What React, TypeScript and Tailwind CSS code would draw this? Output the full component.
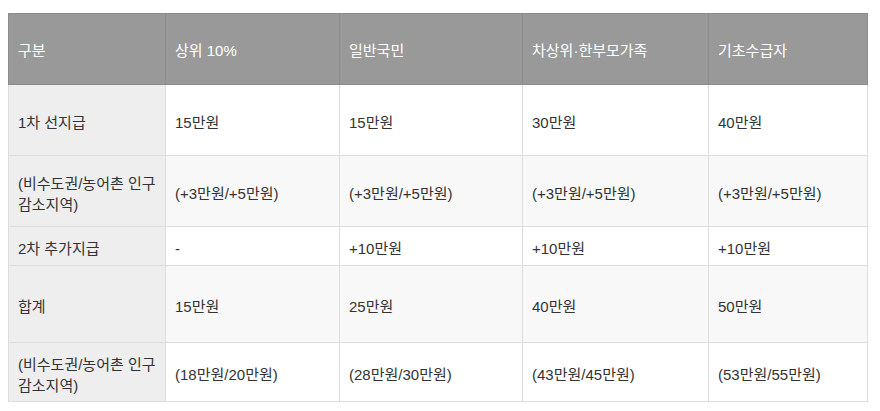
const header = ['구분', '상위 10%', '일반국민', '차상위·한부모가족', '기초수급자'];

type Row = { label: React.ReactNode; cells: string[]; h: string; striped: boolean };

const rows: Row[] = [
  { label: '1차 선지급', cells: ['15만원', '15만원', '30만원', '40만원'], h: 'h-[71px]', striped: false },
  {
    label: (
      <>
        (비수도권/농어촌 인구
        <br />
        감소지역)
      </>
    ),
    cells: ['(+3만원/+5만원)', '(+3만원/+5만원)', '(+3만원/+5만원)', '(+3만원/+5만원)'],
    h: 'h-[71px]',
    striped: true,
  },
  { label: '2차 추가지급', cells: ['-', '+10만원', '+10만원', '+10만원'], h: 'h-[39px]', striped: false },
  { label: '합계', cells: ['15만원', '25만원', '40만원', '50만원'], h: 'h-[77px]', striped: true },
  {
    label: (
      <>
        (비수도권/농어촌 인구
        <br />
        감소지역)
      </>
    ),
    cells: ['(18만원/20만원)', '(28만원/30만원)', '(43만원/45만원)', '(53만원/55만원)'],
    h: 'h-[59px]',
    striped: false,
  },
];

export default function App() {
  return (
    <div className="min-h-screen bg-white pt-[13px] pl-[8px] font-['Liberation_Sans','Noto_Sans_CJK_KR',sans-serif] text-[15px] text-[#333]">
      <table className="table-fixed border-collapse w-[859px]">
        <colgroup>
          <col className="w-[157px]" />
          <col className="w-[174px]" />
          <col className="w-[183px]" />
          <col className="w-[186px]" />
          <col className="w-[159px]" />
        </colgroup>
        <thead>
          <tr className="h-[71px] bg-[#999999]">
            {header.map((t) => (
              <th
                key={t}
                className="border border-[#8c8c8c] px-[9px] pt-[5px] text-left align-middle font-normal text-white"
              >
                {t}
              </th>
            ))}
          </tr>
        </thead>
        <tbody>
          {rows.map((r, i) => (
            <tr key={i} className={`${r.h} ${r.striped ? 'bg-[#f8f8f8]' : 'bg-white'}`}>
              <td className="border border-[#dddddd] bg-[#eeeeee] px-[9px] pt-[5px] align-middle leading-[21px]">
                {r.label}
              </td>
              {r.cells.map((c, j) => (
                <td key={j} className="border border-[#dddddd] px-[9px] pt-[5px] align-middle leading-[21px]">
                  {c}
                </td>
              ))}
            </tr>
          ))}
        </tbody>
      </table>
    </div>
  );
}
